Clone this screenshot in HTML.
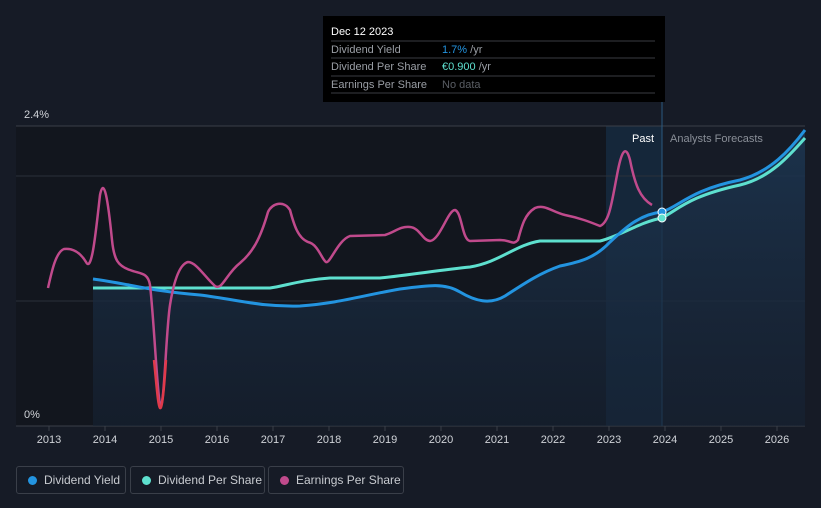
<!DOCTYPE html>
<html><head><style>
body{margin:0;background:#161b26;width:821px;height:508px;overflow:hidden;font-family:"Liberation Sans",sans-serif;}
.lg{position:absolute;top:466px;border:1px solid #3a3f49;border-radius:3px;color:#c8cbd0;font-size:12px;line-height:26px;box-sizing:border-box;height:28px;white-space:nowrap;overflow:hidden}
.lg i{display:inline-block;width:9px;height:9px;border-radius:50%;margin:0 7px 0 11px;vertical-align:-1px}
</style></head><body>
<svg width="821" height="508" style="position:absolute;left:0;top:0">
<defs><linearGradient id="g" x1="0" y1="0" x2="0" y2="1"><stop offset="0" stop-color="#1c3550" stop-opacity=".9"/><stop offset="1" stop-color="#162233" stop-opacity=".6"/></linearGradient></defs>
<rect x="16" y="126" width="590" height="300" fill="#12161e"/>
<rect x="606" y="126" width="56" height="300" fill="#15273a"/>
<line x1="16" y1="126" x2="805" y2="126" stroke="#3a3f48"/>
<line x1="16" y1="176" x2="805" y2="176" stroke="#2a303a"/>
<line x1="16" y1="301" x2="805" y2="301" stroke="#2a303a"/>
<line x1="16" y1="426" x2="805" y2="426" stroke="#3a3f48"/>
<line x1="662" y1="100" x2="662" y2="426" stroke="#2a5a80"/>
<path d="M93,279 C130,284 150,291 200,295 C240,300 260,307 300,306 C340,303 360,296 400,289 C430,285 445,283 460,292 C475,301 490,305 505,296 C525,283 540,273 560,266 C580,262 595,258 610,242 C625,228 640,214 662,212 C680,206 690,190 740,180 C770,172 790,150 805,130 L805,426 L93,426 Z" fill="url(#g)"/>
<path d="M93,288 L270,288 C285,286 300,280 330,278 L380,278 C410,275 440,270 470,267 C500,262 515,245 540,241 L600,241 C620,236 640,222 662,218 C680,208 690,196 740,185 C770,178 790,155 805,138" fill="none" stroke="#5ee0cf" stroke-width="3"/>
<path d="M93,279 C130,284 150,291 200,295 C240,300 260,307 300,306 C340,303 360,296 400,289 C430,285 445,283 460,292 C475,301 490,305 505,296 C525,283 540,273 560,266 C580,262 595,258 610,242 C625,228 640,214 662,212 C680,206 690,190 740,180 C770,172 790,150 805,130" fill="none" stroke="#2394e0" stroke-width="3"/>
<path d="M48,288 C52,270 56,252 64,249 C72,248 80,252 86,262 C92,274 96,230 100,195 C104,175 108,200 112,240 C114,260 118,266 130,270 C140,274 148,272 150,285 C154,320 157,390 160,405 C164,415 166,330 170,305 C174,280 180,264 188,262 C196,262 205,277 215,286 C222,291 226,274 240,263 C252,253 260,240 268,212 C272,203 284,200 290,210 C294,225 298,238 308,242 C318,244 322,260 326,262 C330,264 338,240 350,236 L385,235 C395,232 400,226 410,227 C420,228 422,240 430,241 C440,240 448,210 455,210 C462,212 462,240 470,241 L500,240 C512,240 512,246 518,240 C522,225 525,214 535,208 C545,204 552,212 565,215 C580,218 590,222 600,226 C610,222 612,200 618,170 C622,150 626,145 630,160 C635,185 640,198 652,205" fill="none" stroke="#c04a8c" stroke-width="2.5"/>
<path d="M154,360 C157,390 158,405 160,408 C162,410 164,390 166,360" fill="none" stroke="#e03a4a" stroke-width="2.5"/>
<circle cx="662" cy="212" r="4" fill="#2394e0" stroke="#fff" stroke-width="1"/>
<circle cx="662" cy="218" r="4" fill="#5ee0cf" stroke="#fff" stroke-width="1"/>
<g font-size="11" fill="#d0d3d8" text-anchor="middle">
<text x="49" y="443">2013</text><text x="105" y="443">2014</text><text x="161" y="443">2015</text><text x="217" y="443">2016</text><text x="273" y="443">2017</text><text x="329" y="443">2018</text><text x="385" y="443">2019</text><text x="441" y="443">2020</text><text x="497" y="443">2021</text><text x="553" y="443">2022</text><text x="609" y="443">2023</text><text x="665" y="443">2024</text><text x="721" y="443">2025</text><text x="777" y="443">2026</text>
</g>
<g stroke="#3a3f48"><line x1="49" y1="426" x2="49" y2="431"/><line x1="105" y1="426" x2="105" y2="431"/><line x1="161" y1="426" x2="161" y2="431"/><line x1="217" y1="426" x2="217" y2="431"/><line x1="273" y1="426" x2="273" y2="431"/><line x1="329" y1="426" x2="329" y2="431"/><line x1="385" y1="426" x2="385" y2="431"/><line x1="441" y1="426" x2="441" y2="431"/><line x1="497" y1="426" x2="497" y2="431"/><line x1="553" y1="426" x2="553" y2="431"/><line x1="609" y1="426" x2="609" y2="431"/><line x1="665" y1="426" x2="665" y2="431"/><line x1="721" y1="426" x2="721" y2="431"/><line x1="777" y1="426" x2="777" y2="431"/></g>
<text x="24" y="118" font-size="11" fill="#d0d3d8">2.4%</text>
<text x="24" y="418" font-size="11" fill="#d0d3d8">0%</text>
<text x="654" y="142" font-size="11" fill="#fff" text-anchor="end">Past</text>
<text x="670" y="142" font-size="11" fill="#8a8f98">Analysts Forecasts</text>
<rect x="323" y="16" width="342" height="86" fill="#000"/>
<text x="331" y="35" font-size="11" fill="#fff">Dec 12 2023</text>
<g stroke="#3a3d42"><line x1="331" y1="41" x2="655" y2="41"/><line x1="331" y1="58" x2="655" y2="58"/><line x1="331" y1="76" x2="655" y2="76"/><line x1="331" y1="93" x2="655" y2="93"/></g>
<g font-size="11"><text x="331" y="53" fill="#9a9ea5">Dividend Yield</text><text x="442" y="53" fill="#2394e0">1.7% <tspan fill="#9a9ea5">/yr</tspan></text>
<text x="331" y="70" fill="#9a9ea5">Dividend Per Share</text><text x="442" y="70" fill="#5ee0cf">€0.900 <tspan fill="#9a9ea5">/yr</tspan></text>
<text x="331" y="88" fill="#9a9ea5">Earnings Per Share</text><text x="442" y="88" fill="#5a5e65">No data</text></g>
</svg>
<div class="lg" style="left:16px;width:110px"><i style="background:#2394e0"></i>Dividend Yield</div>
<div class="lg" style="left:130px;width:135px"><i style="background:#5ee0cf"></i>Dividend Per Share</div>
<div class="lg" style="left:268px;width:136px"><i style="background:#c04a8c"></i>Earnings Per Share</div>
</body></html>
